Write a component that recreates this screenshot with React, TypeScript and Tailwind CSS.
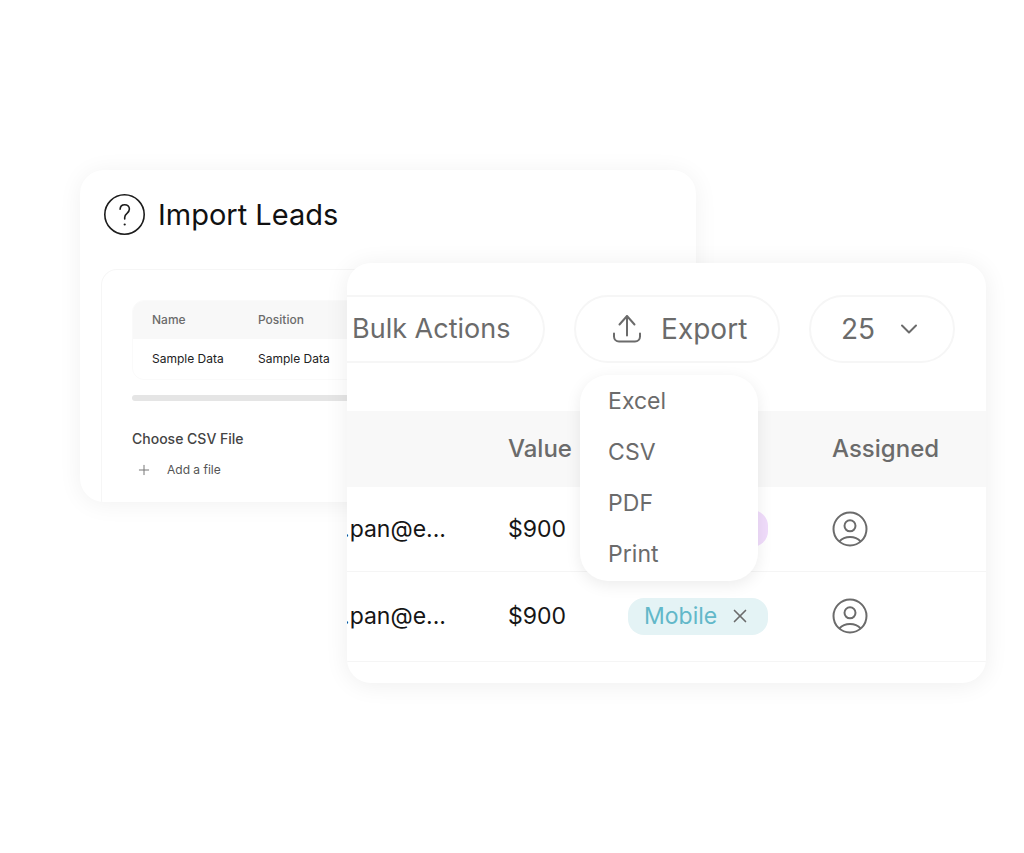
import { ChevronDown, Plus, X } from 'lucide-react'

const formats = ['Excel', 'CSV', 'PDF', 'Print']

const leads = [
  { email: '.pan@e...', value: '$900', tag: '' },
  { email: '.pan@e...', value: '$900', tag: 'Mobile' },
]

function HelpIcon() {
  return (
    <svg className="size-[42px] shrink-0" viewBox="0 0 42 42" fill="none" stroke="#1c1c1c" strokeLinecap="round" aria-hidden="true">
      <circle cx="20.5" cy="20.5" r="19.7" strokeWidth="1.6" />
      <path d="M16.1 15.3c.1-2.700 2-4.600 4.600-4.600 2.700 0 4.700 1.800 4.700 4.300 0 1.900-.9 3-2.400 4.300-1.600 1.300-2.300 2.300-2.300 4.100v1.600" strokeWidth="1.6" />
      <circle cx="20.700" cy="30.500" r="1.1" fill="#1c1c1c" stroke="none" />
    </svg>
  )
}

function UploadIcon() {
  return (
    <svg className="h-[30px] w-[28px] shrink-0" viewBox="0 0 28 30" fill="none" stroke="currentColor" strokeWidth="2" strokeLinecap="round" strokeLinejoin="round" aria-hidden="true">
      <path d="M14 21.5V2M6.500 10.500 14 2l7.500 8.500" />
      <path d="M1 19.500v3a5 5 0 0 0 5 5h16a5 5 0 0 0 5-5v-3" />
    </svg>
  )
}

function UserIcon() {
  return (
    <svg className="size-[36px]" viewBox="0 0 36 36" fill="none" stroke="#6b6b6b" strokeWidth="2" role="img" aria-label="User">
      <circle cx="18" cy="18" r="16.500" />
      <circle cx="18" cy="14.800" r="5.500" />
      <path d="M7.300 30.500c2.700-2.900 6.400-4.400 10.700-4.400s8 1.500 10.700 4.400" />
    </svg>
  )
}

function ImportCard() {
  return (
    <section className="col-span-2 col-start-1 row-start-1 self-start overflow-hidden rounded-3xl bg-white px-[21px] pt-6 shadow-[0_2px_24px_rgba(0,0,0,0.06)]">
      <header className="flex items-center gap-3 pl-[3px]">
        <HelpIcon />
        <h1 className="text-[29px] leading-[42px] text-[#111]">Import Leads</h1>
      </header>

      <div className="mt-[33px] rounded-t-2xl border border-b-0 border-[#f6f6f6] px-[30px] pt-[30px] pb-[22px]">
        <div className="overflow-hidden rounded-xl border border-[#fafafa]">
          <table className="w-full table-fixed text-left text-xs leading-5">
            <colgroup>
              <col className="w-[106px]" />
              <col />
            </colgroup>
            <thead className="bg-[#f8f8f8] text-[#6b6b6b]">
              <tr>
                <th className="py-[9px] pl-[19px] font-medium">Name</th>
                <th className="py-[9px] pl-[19px] font-medium">Position</th>
              </tr>
            </thead>
            <tbody className="text-[#222]">
              <tr>
                <td className="py-[10px] pl-[19px] whitespace-nowrap">Sample Data</td>
                <td className="py-[10px] pl-[19px] whitespace-nowrap">Sample Data</td>
              </tr>
            </tbody>
          </table>
        </div>
        <div className="mt-[15px] h-[6px] rounded-full bg-[#e5e5e5]" />
        <h2 className="mt-7 text-sm leading-5 font-medium text-[#444]">Choose CSV File</h2>
        <button type="button" className="mt-[11px] flex items-center gap-[15px] pl-1 text-xs leading-5 text-[#555]">
          <Plus className="size-4 text-[#777]" strokeWidth={1.5} />
          Add a file
        </button>
      </div>
    </section>
  )
}

function Toolbar() {
  return (
    <div className="flex justify-between pr-[31px] text-[28px] leading-9 text-[#6b6b6b]">
      <button type="button" className="h-[68px] rounded-r-full border-2 border-l-0 border-[#f6f6f6] pr-[33px] pl-[5px] text-[27px] whitespace-nowrap">
        Bulk Actions
      </button>

      {/* Export with its open menu */}
      <div className="relative">
        <button type="button" aria-expanded="true" className="flex h-[68px] items-center gap-5 rounded-full border-2 border-[#f6f6f6] pr-[31px] pl-[37px]">
          <UploadIcon />
          Export
        </button>
        <ul className="absolute top-20 left-[6px] z-10 w-[178px] rounded-[28px] bg-white pb-[2px] text-[23px] shadow-[0_4px_16px_rgba(0,0,0,0.08)]">
          {formats.map((format) => (
            <li key={format}>
              <button type="button" className="h-[51px] w-full pl-7 text-left">{format}</button>
            </li>
          ))}
        </ul>
      </div>

      <div className="relative">
        <select aria-label="Rows per page" defaultValue="25" className="h-[68px] w-[146px] appearance-none rounded-full border-2 border-[#f6f6f6] bg-white pl-[30px]">
          <option>25</option>
          <option>50</option>
          <option>100</option>
        </select>
        <ChevronDown className="pointer-events-none absolute top-[20px] right-8 size-7" strokeWidth={1.7} />
      </div>
    </div>
  )
}

function LeadsCard() {
  return (
    <section className="z-10 col-span-2 col-start-2 row-start-1 mt-[93px] self-start overflow-hidden rounded-3xl bg-white pt-8 pb-[21px] shadow-[0_2px_24px_rgba(0,0,0,0.07)]">
      <Toolbar />
      <table className="mt-12 w-full table-fixed text-left text-[23px]">
        <colgroup>
          <col className="w-[161px]" />
          <col className="w-[120px]" />
          <col className="w-[204px]" />
          <col />
        </colgroup>
        <thead className="bg-[#f8f8f8] text-2xl text-[#6b6b6b]">
          <tr className="h-[76px]">
            <th aria-label="Email" />
            <th className="font-medium">Value</th>
            <th aria-label="Tag" />
            <th className="font-medium">Assigned</th>
          </tr>
        </thead>
        <tbody className="text-[#161616]">
          {leads.map((lead, i) => (
            <tr key={i} className="h-[90px] border-b border-[#f5f5f5] first:h-[84px]">
              <td><span className="-ml-1">{lead.email}</span></td>
              <td>{lead.value}</td>
              <td>
                {lead.tag ? (
                  <span className="flex h-[37px] w-[140px] items-center gap-3 rounded-2xl bg-[#e4f3f5] pl-4 text-[#62b8c9]">
                    {lead.tag}
                    <button type="button" aria-label="Remove tag">
                      <X className="size-[22px] text-[#6b6b6b]" strokeWidth={1.8} />
                    </button>
                  </span>
                ) : (
                  <span className="block h-[37px] w-[140px] rounded-2xl bg-[#f0dcfb]" />
                )}
              </td>
              <td><UserIcon /></td>
            </tr>
          ))}
        </tbody>
      </table>
    </section>
  )
}

export default function App() {
  return (
    <main className="grid min-h-screen grid-cols-[267fr_349fr_290fr] content-start bg-white pt-[170px] pr-[38px] pb-20 pl-20 font-['Inter',sans-serif]">
      <ImportCard />
      <LeadsCard />
    </main>
  )
}
